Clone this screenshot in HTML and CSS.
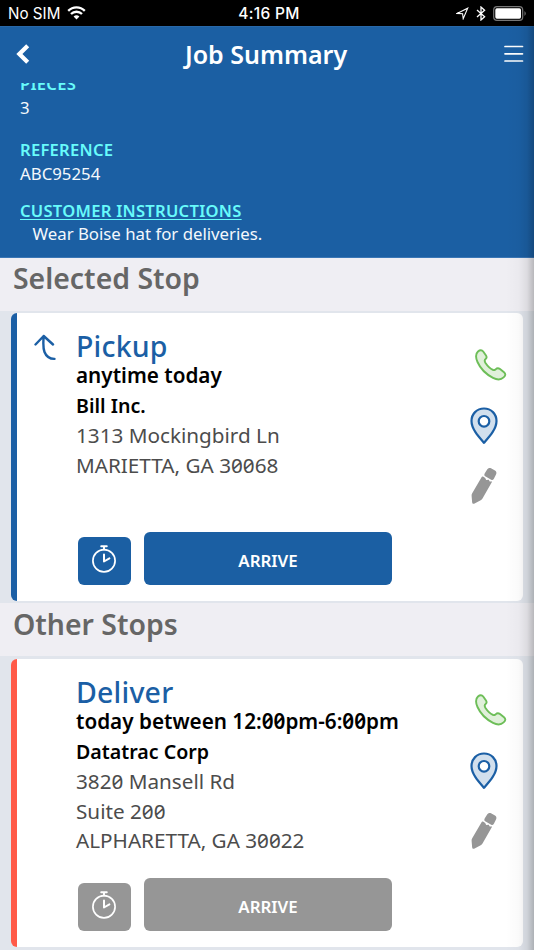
FILE: index.html
```html
<!DOCTYPE html>
<html lang="en">
<head>
<meta charset="utf-8">
<title>Job Summary</title>
<link rel="stylesheet" href="styles.css">
</head>
<body>
<svg class="defs" width="0" height="0">
  <symbol id="phone" viewBox="0 0 32 32"><path d="M3 2.500C5 .800 7 1 8.200 2.500L11 6.500C12 8 11.800 9 10.600 10C9.200 11 9.500 12.300 10.500 14C12.500 17 15 19.800 18.300 21C19.500 21.400 20 20.800 20.800 20.200C22 19 23.500 19 25 20L29 23.200C31 25 30.500 26.600 28.600 28.400C25.800 31 21.800 30.800 18 28.800C11 25.200 5.500 19.800 2.500 13C.600 8.600 .700 4.600 3 2.500Z" fill="#e0f0da" stroke="#6dbe58" stroke-width="1.900" stroke-linejoin="round"/></symbol>
  <symbol id="pin" viewBox="0 0 28 38"><path d="M14 1.500C21.200 1.500 26.500 7 26.500 14C26.500 22 19.500 29.500 14 35.800C8.500 29.500 1.500 22 1.500 14C1.500 7 6.800 1.500 14 1.500Z" fill="#d1dfed" stroke="#1b5fa5" stroke-width="2.200" stroke-linejoin="round"/><circle cx="14" cy="14.300" r="5.300" fill="#fff" stroke="#1b5fa5" stroke-width="2.200"/></symbol>
  <symbol id="pencil" viewBox="0 0 26 38"><path d="M13.800 6.200L16 2.800C16.800 1.200 18.500 .700 20 1.200L24 3.500C25.500 4.500 25.800 6 25 7.500L23 11.600C22.500 13 21.500 13.300 20.200 12.700L14.600 9.600C13.200 8.800 13 7.500 13.800 6.200ZM12.400 9.800L14.200 10.900L15.200 13L17.800 12.800L18.700 14.400L21.200 14.500L11.500 31.500C11 32.300 10.500 32.800 9.700 33.200L3.600 36.600C2.300 37.300 1.200 36.600 1.100 35L.600 28.800C.500 27.800 .700 27.200 1.200 26.300L10.400 10.500C10.900 9.600 11.500 9.300 12.400 9.800Z" fill="#969696"/></symbol>
  <symbol id="timer" viewBox="0 0 26 30"><g fill="none" stroke="#fff" stroke-linecap="round"><circle cx="13" cy="16.800" r="11.100" stroke-width="1.700"/><path d="M10.200 2.200H15.800M13 2.200V5.600" stroke-width="1.900"/><path d="M13 10.500V17.500L18.400 14.400" stroke-width="2" stroke-linejoin="round"/></g></symbol>
</svg>
<div class="phone">
  <div class="status">
    <div class="carrier"><span>No SIM</span>
      <svg width="19" height="14" viewBox="0 0 19 14"><g fill="none" stroke="#fff" stroke-width="2.300"><path d="M1.200 4.900C5.800 .300 13.200 .300 17.800 4.900"/><path d="M4 8C7 5 12 5 15 8"/></g><path d="M9.500 13.400L6.600 10.400C8.300 8.900 10.700 8.900 12.400 10.400Z" fill="#fff"/></svg>
    </div>
    <div class="clock">4:16 PM</div>
    <div class="indicators">
      <svg width="13" height="13" viewBox="0 0 13 13"><path d="M1 6.400L11.700 1.200L7.200 11.700L6.600 6.800Z" fill="none" stroke="#fff" stroke-width="1.100"/></svg>
      <svg class="bluetooth" width="10" height="15" viewBox="0 0 10 15"><path d="M1 4L8.600 10.800L5 14V1L8.600 4.200L1 11" fill="none" stroke="#fff" stroke-width="1.300"/></svg>
      <svg class="battery" width="34" height="15" viewBox="0 0 34 15"><rect x=".700" y=".700" width="29" height="13.600" rx="3.300" fill="none" stroke="#777" stroke-width="1.200"/><rect x="2.300" y="2.300" width="25.700" height="10.400" rx="1.600" fill="#fff"/><path d="M31.500 5Q34 7.500 31.500 10Z" fill="#777"/></svg>
    </div>
  </div>
  <header class="bar">
    <svg width="16" height="22" viewBox="0 0 16 22"><path d="M13.700 2.800L5.400 11L13.700 19.200" fill="none" stroke="#fff" stroke-width="4.300"/></svg>
    <h1>Job Summary</h1>
    <svg width="20" height="18" viewBox="0 0 20 18"><path d="M1 1.500H18.500M1 8.800H18.500M1 16H18.500" stroke="#fff" stroke-width="1.700" stroke-linecap="round"/></svg>
  </header>
  <section class="details">
    <div class="label pieces">PIECES</div>
    <div class="value">3</div>
    <div class="label reference">REFERENCE</div>
    <div class="value">ABC95254</div>
    <div class="label instructions">CUSTOMER INSTRUCTIONS</div>
    <div class="value note">Wear Boise hat for deliveries.</div>
  </section>
  <h2>Selected Stop</h2>
  <article class="card pickup">
    <div class="direction"><svg width="23" height="27" viewBox="0 0 23 27"><path d="M1.500 10.500L9.700 2L19 10.500M9.700 2C9.200 8 8.700 13.500 10.500 18C12.500 23 15.500 25 20.500 24.900" fill="none" stroke="#1b5fa5" stroke-width="2.400" stroke-linecap="round" stroke-linejoin="round"/></svg></div>
    <div class="stop">
      <h3>Pickup</h3>
      <div class="time">anytime today</div>
      <div class="company">Bill Inc.</div>
      <div class="address">1313 Mockingbird Ln</div>
      <div class="address">MARIETTA, GA 30068</div>
      <div class="buttons"><button class="timer"><svg width="26" height="30"><use href="#timer"/></svg></button><button class="arrive">ARRIVE</button></div>
    </div>
    <div class="actions"><svg width="32" height="32"><use href="#phone"/></svg><svg class="pin" width="28" height="38"><use href="#pin"/></svg><svg class="pencil" width="26" height="38"><use href="#pencil"/></svg></div>
  </article>
  <h2 class="other">Other Stops</h2>
  <article class="card deliver">
    <div class="direction"></div>
    <div class="stop">
      <h3>Deliver</h3>
      <div class="time">today between 12:00pm-6:00pm</div>
      <div class="company">Datatrac Corp</div>
      <div class="address">3820 Mansell Rd</div>
      <div class="address">Suite 200</div>
      <div class="address">ALPHARETTA, GA 30022</div>
      <div class="buttons"><button class="timer"><svg width="26" height="30"><use href="#timer"/></svg></button><button class="arrive">ARRIVE</button></div>
    </div>
    <div class="actions"><svg width="32" height="32"><use href="#phone"/></svg><svg class="pin" width="28" height="38"><use href="#pin"/></svg><svg class="pencil" width="26" height="38"><use href="#pencil"/></svg></div>
  </article>
  <div class="edge-shadow"></div>
</div>
</body>
</html>
```
FILE: styles.css
```css
* { box-sizing: border-box; }
body { margin: 0; font-family: "Noto Sans", sans-serif; }
svg { display: block; flex: none; }
.defs { position: absolute; }
.phone { position: relative; width: 534px; height: 950px; overflow: hidden; background: #e1e5ec; }
.status { height: 26px; background: #000; color: #fff; display: grid; grid-template-columns: 1fr auto 1fr; align-items: center; padding: 2px 7px 0 8px; font: 16px/24px Inter, sans-serif; }
.carrier { display: flex; align-items: center; gap: 7px; font-size: 15.200px; font-weight: 400; }
.carrier svg { margin-top: -2px; }
.clock { font-weight: 500; font-size: 15.500px; letter-spacing: .35px; padding-left: 3px; }
.indicators { display: flex; align-items: center; justify-content: flex-end; padding-bottom: 1px; }
.bluetooth { margin-left: 7px; }
.battery { margin-left: 7px; }
.bar { height: 57px; background: #1b5fa3; border-top: 1px solid #2868a8; color: #fff; display: flex; align-items: center; justify-content: space-between; padding: 0 10px 2px 14px; }
h1 { margin: 0 0 0 -2px; font-size: 25px; line-height: 34px; font-weight: 600; }
.details { height: 175px; overflow: hidden; background: #1b5fa3; padding-left: 20px; border-bottom: 1px solid #3a76b5; }
.label { color: #68fbfb; font-size: 16.600px; line-height: 22px; font-weight: 600; letter-spacing: .25px; }
.pieces { margin-top: -10px; }
.value { color: #f4f8fc; font-size: 16.800px; line-height: 24px; margin-top: 1px; }
.reference { margin-top: 19px; }
.instructions { margin-top: 14px; text-decoration: underline; text-decoration-thickness: 1px; text-underline-offset: 2px; }
.note { margin-top: 0; padding-left: 12.500px; }
h2 { margin: 0; height: 53px; padding: 1px 0 0 13px; background: #efeef3; color: #666; font-size: 28.400px; line-height: 38px; font-weight: 600; }
.other { margin-top: 2px; padding-top: 1.500px; }
.card { height: 288px; margin: 2px 11px 0; border-left: 6px solid #1b5fa5; border-radius: 6px; background: #fff; display: flex; font-feature-settings: "zero"; }
.card.deliver { margin-top: 3px; border-left-color: #ff5a48; }
.direction { width: 59px; padding: 21px 0 0 17px; }
.stop { width: 380px; padding-top: 19px; display: flex; flex-direction: column; white-space: nowrap; }
h3 { margin: 0; color: #1b5fa5; font-size: 28.500px; line-height: 29px; font-weight: 550; letter-spacing: .2px; }
.time { font-size: 20.700px; line-height: 29px; font-weight: 600; }
.company { font-size: 19.600px; line-height: 31px; font-weight: 600; }
.address { color: #4c4c4c; font-size: 20.700px; line-height: 29.600px; }
.buttons { display: flex; align-items: flex-end; gap: 13px; margin: auto 0 16px 2px; }
button { border: 0; padding: 0; border-radius: 6px; background: #1b5fa3; color: #fff; font-family: inherit; }
.timer { width: 53px; height: 48px; display: flex; justify-content: center; padding: 7px 2px 0 0; }
.arrive { width: 248px; height: 53px; font-size: 16.900px; font-weight: 600; padding-top: 4px; }
.deliver button { background: #969696; }
.actions { padding: 36px 0 0 14px; }
.deliver .actions { padding-top: 35px; }
.actions svg { margin-left: 5px; }
.actions .pin { margin: 26px 0 0; }
.actions .pencil { margin: 22px 0 0 1px; }
.edge-shadow { position: absolute; top: 26px; right: 0; bottom: 0; width: 28px; background: linear-gradient(to right, rgba(0,0,0,0), rgba(0,0,0,.02) 45%, rgba(0,0,0,.08) 75%, rgba(0,0,0,.23)); pointer-events: none; }
```
